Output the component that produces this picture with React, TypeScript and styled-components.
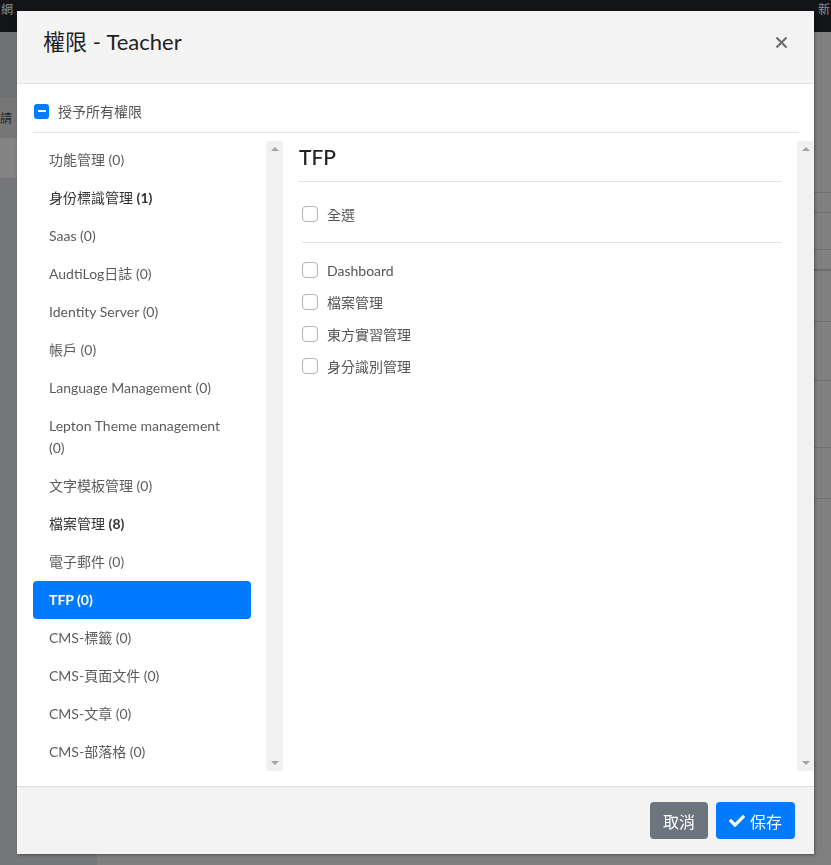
import React from "react";
import styled, { createGlobalStyle } from "styled-components";
import { FaCheck } from "react-icons/fa";

type Group = {
  name: string;
  count: number;
  bold?: boolean;
  active?: boolean;
};

const groups: Group[] = [
  { name: "功能管理", count: 0 },
  { name: "身份標識管理", count: 1, bold: true },
  { name: "Saas", count: 0 },
  { name: "AudtiLog日誌", count: 0 },
  { name: "Identity Server", count: 0 },
  { name: "帳戶", count: 0 },
  { name: "Language Management", count: 0 },
  { name: "Lepton Theme management", count: 0 },
  { name: "文字模板管理", count: 0 },
  { name: "檔案管理", count: 8, bold: true },
  { name: "電子郵件", count: 0 },
  { name: "TFP", count: 0, active: true },
  { name: "CMS-標籤", count: 0 },
  { name: "CMS-頁面文件", count: 0 },
  { name: "CMS-文章", count: 0 },
  { name: "CMS-部落格", count: 0 },
];

const permissions = ["Dashboard", "檔案管理", "東方實習管理", "身分識別管理"];

const GlobalStyle = createGlobalStyle`
  html, body {
    margin: 0;
    padding: 0;
    height: 100%;
    overflow: hidden;
  }
  body {
    font-family: Lato, "Noto Sans CJK TC", sans-serif;
    font-size: 14px;
    color: #555;
  }
`;

/* ---------- page behind the dialog ---------- */

const Page = styled.div`
  display: flex;
  flex-direction: column;
  height: 865px;
  background: #808080;
`;

const TopBar = styled.div`
  height: 32px;
  flex: none;
  background: #121417;
  display: flex;
  justify-content: space-between;
  align-items: flex-start;
  padding: 0 1px;
  font-family: "Noto Sans CJK TC", sans-serif;
  font-size: 12px;
  line-height: 17px;
  color: #8d9096;
`;

const PageBody = styled.div`
  flex: 1;
  display: flex;
`;

const Sidebar = styled.div`
  width: 97px;
  flex: none;
  background: #76777a;
  display: flex;
  flex-direction: column;
`;

const SideBlock = styled.div<{ $h: number; $bg: string }>`
  height: ${(p) => p.$h}px;
  background: ${(p) => p.$bg};
  font-family: "Noto Sans CJK TC", sans-serif;
  font-size: 12px;
  color: #2a2a2a;
  display: flex;
  align-items: center;
`;

const Main = styled.div`
  flex: 1;
  display: flex;
  flex-direction: column;
`;

const TableLine = styled.div<{ $h: number; $dark?: boolean }>`
  height: ${(p) => p.$h}px;
  border-bottom: ${(p) => (p.$dark ? "2px solid #6e6e6e" : "1px solid #707070")};
`;

/* ---------- dialog ---------- */

const Backdrop = styled.div`
  position: fixed;
  inset: 0;
  display: flex;
  justify-content: center;
  align-items: flex-start;
  padding-top: 11px;
`;

const Modal = styled.div`
  width: 797px;
  background: #fff;
  box-shadow: 1px 1px 3px rgba(0, 0, 0, 0.35);
  display: flex;
  flex-direction: column;
`;

const Header = styled.div`
  height: 73px;
  box-sizing: border-box;
  background: #f4f4f4;
  border-bottom: 1px solid #e2e2e2;
  display: flex;
  align-items: flex-start;
  justify-content: space-between;
  padding: 16px 26px 0 26px;
`;

const Title = styled.h5`
  margin: 0;
  font-size: 22px;
  line-height: 30px;
  font-weight: 400;
  color: #222;
`;

const CloseButton = styled.button`
  border: 0;
  background: none;
  padding: 0;
  margin-top: 8px;
  width: 14px;
  height: 14px;
  display: flex;
  align-items: center;
  justify-content: center;
  cursor: pointer;
`;

const Body = styled.div`
  padding: 16px 15px 15px 16px;
  display: flex;
  flex-direction: column;
`;

const GrantRow = styled.label`
  display: flex;
  align-items: center;
  gap: 9px;
  height: 22px;
  font-size: 14px;
  color: #555;
  padding-bottom: 10px;
  border-bottom: 1px solid #e6e6e6;
`;

const IndeterminateBox = styled.span`
  width: 15px;
  height: 15px;
  border-radius: 3px;
  background: #007bff;
  display: flex;
  align-items: center;
  justify-content: center;
  margin-left: 1px;

  &::after {
    content: "";
    width: 8px;
    height: 2.5px;
    background: #fff;
  }
`;

const Columns = styled.div`
  display: flex;
  height: 630px;
  margin: 8px -15px 0 0;
`;

const LeftCol = styled.div`
  width: 250px;
  flex: none;
  display: flex;
  gap: 15px;
`;

const NavList = styled.div`
  flex: 1;
  display: flex;
  flex-direction: column;
`;

const NavItem = styled.div<{ $active?: boolean; $bold?: boolean }>`
  padding: 8px 16px;
  line-height: 22px;
  border-radius: 4px;
  font-size: 14px;
  background: ${(p) => (p.$active ? "#007bff" : "transparent")};
  color: ${(p) => (p.$active ? "#fff" : p.$bold ? "#333" : "#5c5c5c")};
  font-weight: ${(p) => (p.$active ? 700 : 400)};
`;

const Count = styled.b`
  font-weight: 700;
`;

const ScrollTrack = styled.div`
  width: 17px;
  flex: none;
  background: #f1f1f1;
  display: flex;
  flex-direction: column;
  justify-content: space-between;
  align-items: center;
  padding: 6px 0 6px;
`;

const Arrow = styled.span<{ $down?: boolean }>`
  width: 0;
  height: 0;
  border-left: 4px solid transparent;
  border-right: 4px solid transparent;
  ${(p) =>
    p.$down ? "border-top: 4px solid #a3a3a3;" : "border-bottom: 4px solid #a3a3a3;"}
`;

const RightCol = styled.div`
  flex: 1;
  display: flex;
`;

const Panel = styled.div`
  flex: 1;
  padding: 0 15px 0 15px;
`;

const PanelTitle = styled.h4`
  margin: 0;
  font-size: 21px;
  font-weight: 500;
  line-height: 32px;
  color: #222;
  padding: 0 0 8px 1px;
  border-bottom: 1px solid #e3e3e3;
`;

const CheckGroup = styled.div<{ $top: number }>`
  margin: ${(p) => p.$top}px 0 0 4px;
  display: flex;
  flex-direction: column;
  gap: 8px;
`;

const Divider = styled.hr`
  margin: 16px 0 0 4px;
  border: 0;
  border-top: 1px solid #e3e3e3;
`;

const CheckRow = styled.label`
  display: flex;
  align-items: center;
  gap: 9px;
  height: 24px;
  font-size: 14px;
  color: #555;
`;

const CheckBox = styled.span`
  width: 14px;
  height: 14px;
  border: 1px solid #adb5bd;
  border-radius: 4px;
  background: #fff;
`;

const Footer = styled.div`
  height: 67px;
  border-top: 1px solid #e0e0e0;
  background: #f3f3f3;
  display: flex;
  justify-content: flex-end;
  align-items: center;
  gap: 8px;
  padding: 0 19px 0 0;
`;

const Button = styled.button<{ $variant: "primary" | "secondary" }>`
  height: 37px;
  border: 0;
  border-radius: 4px;
  padding: 0 13px;
  display: flex;
  align-items: center;
  gap: 5px;
  font-family: "Noto Sans CJK TC", sans-serif;
  font-size: 16px;
  color: #fff;
  background: ${(p) => (p.$variant === "primary" ? "#007bff" : "#6c757d")};
`;

export default function App() {
  return (
    <>
      <GlobalStyle />
      <Page>
        <TopBar>
          <span>網</span>
          <span>新</span>
        </TopBar>
        <PageBody>
          <Sidebar>
            <SideBlock $h={65} $bg="#6f7275" />
            <SideBlock $h={41} $bg="#767676">請</SideBlock>
            <SideBlock $h={40} $bg="#848484" />
          </Sidebar>
          <Main>
            <TableLine $h={160} />
            <TableLine $h={19} />
            <TableLine $h={36} />
            <TableLine $h={19} $dark />
            <TableLine $h={50} />
            <TableLine $h={58} />
            <TableLine $h={66} />
            <TableLine $h={50} />
          </Main>
        </PageBody>
      </Page>

      <Backdrop>
        <Modal>
          <Header>
            <Title>權限 - Teacher</Title>
            <CloseButton aria-label="close">
              <svg width="13" height="13" viewBox="0 0 13 13">
                <path
                  d="M1.5 1.5 L11.5 11.5 M11.5 1.5 L1.5 11.5"
                  stroke="#707070"
                  strokeWidth="2.2"
                />
              </svg>
            </CloseButton>
          </Header>

          <Body>
            <GrantRow>
              <IndeterminateBox />
              授予所有權限
            </GrantRow>

            <Columns>
              <LeftCol>
                <NavList>
                  {groups.map((g) => (
                    <NavItem key={g.name} $active={g.active} $bold={g.bold}>
                      {g.name}{" "}
                      {g.bold ? <Count>({g.count})</Count> : `(${g.count})`}
                    </NavItem>
                  ))}
                </NavList>
                <ScrollTrack>
                  <Arrow />
                  <Arrow $down />
                </ScrollTrack>
              </LeftCol>

              <RightCol>
                <Panel>
                  <PanelTitle>TFP</PanelTitle>
                  <CheckGroup $top={20}>
                    <CheckRow>
                      <CheckBox />
                      全選
                    </CheckRow>
                  </CheckGroup>
                  <Divider />
                  <CheckGroup $top={15}>
                    {permissions.map((p) => (
                      <CheckRow key={p}>
                        <CheckBox />
                        {p}
                      </CheckRow>
                    ))}
                  </CheckGroup>
                </Panel>
                <ScrollTrack>
                  <Arrow />
                  <Arrow $down />
                </ScrollTrack>
              </RightCol>
            </Columns>
          </Body>

          <Footer>
            <Button $variant="secondary">取消</Button>
            <Button $variant="primary">
              <FaCheck size={16} />
              保存
            </Button>
          </Footer>
        </Modal>
      </Backdrop>
    </>
  );
}
